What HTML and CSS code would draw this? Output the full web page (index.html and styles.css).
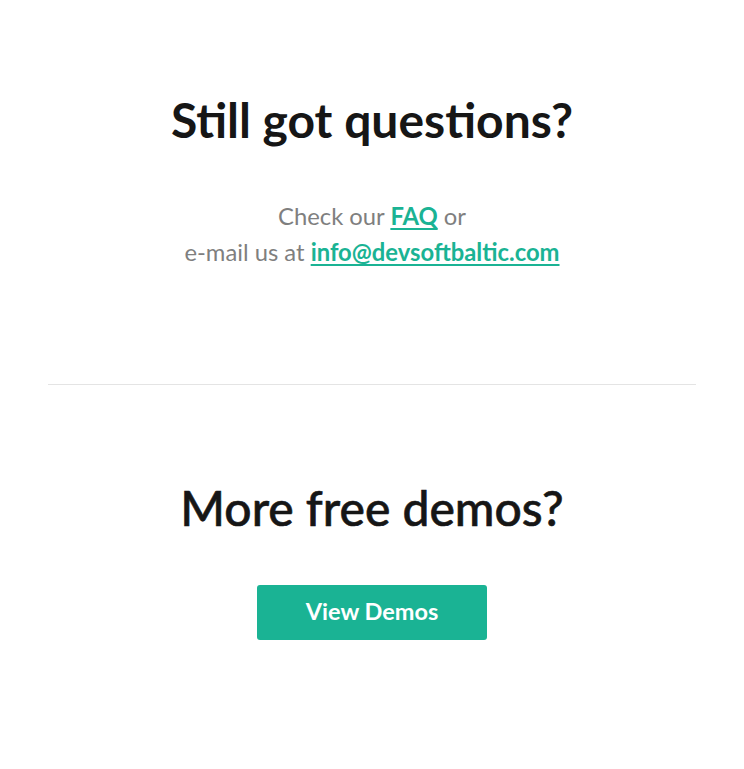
FILE: index.html
```html
<!DOCTYPE html>
<html>
<head>
<meta charset="utf-8">
<link rel="stylesheet" href="styles.css">
</head>
<body>
<main class="page">
  <section class="block block-top">
    <h2 class="title">Still got questions?</h2>
    <p class="text">Check our <a href="#" class="link">FAQ</a> or<br>e-mail us at <a href="#" class="link">info@devsoftbaltic.com</a></p>
  </section>
  <hr class="divider">
  <section class="block block-bottom">
    <h2 class="title title-alt">More free demos?</h2>
    <a href="#" class="btn">View Demos</a>
  </section>
</main>
</body>
</html>
```
FILE: styles.css
```css
html, body {
  margin: 0;
  padding: 0;
  background: #ffffff;
}
body {
  font-family: Lato, "Open Sans", sans-serif;
  color: #1a1a1a;
}
.page {
  padding: 0 48px;
}
.block {
  display: flex;
  flex-direction: column;
  align-items: center;
  text-align: center;
}
.block-top {
  padding-top: 92px;
  padding-bottom: 114px;
}
.title {
  margin: 0;
  font-size: 48px;
  font-weight: 700;
  line-height: 56px;
  color: #161616;
}
.title-alt {
  font-weight: 500;
  -webkit-text-stroke: 0.6px #161616;
}
.text {
  margin: 50px 0 0;
  font-size: 23.8px;
  line-height: 36px;
  color: #7f7f7f;
}
.link {
  color: #1ab394;
  font-weight: 700;
  text-decoration: underline;
  text-decoration-thickness: 2px;
  text-underline-offset: 3px;
}
.divider {
  margin: 0;
  border: 0;
  border-top: 1px solid #e4e4e4;
}
.block-bottom {
  padding-top: 95px;
  padding-bottom: 120px;
}
.btn {
  margin-top: 49px;
  display: flex;
  align-items: center;
  justify-content: center;
  width: 230px;
  height: 55px;
  padding-bottom: 3px;
  box-sizing: border-box;
  background: #1ab394;
  border-radius: 3px;
  color: #ffffff;
  font-size: 23.5px;
  font-weight: 700;
  text-decoration: none;
}
```
